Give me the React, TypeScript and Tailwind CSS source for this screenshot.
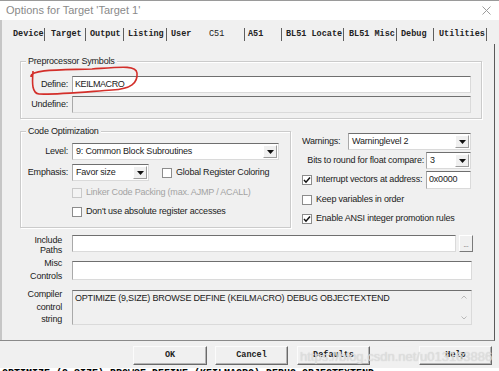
import React from 'react';
import clsx from 'clsx';

const tabs = [
  { label: 'Device', w: 'w-[35px]', pl: 'pl-[3px]', sep: true },
  { label: 'Target', w: 'w-[41px]', pl: 'pl-[6px]', sep: true },
  { label: 'Output', w: 'w-[38px]', pl: 'pl-[4px]', sep: true },
  { label: 'Listing', w: 'w-[43px]', pl: 'pl-[4px]', sep: true },
  { label: 'User', w: 'w-[36px]', pl: 'pl-[4px]', sep: false },
  { label: 'C51', w: 'w-[42px]', pl: 'pl-[6px]', sep: true },
  { label: 'A51', w: 'w-[37px]', pl: 'pl-[3px]', sep: true },
  { label: 'BL51 Locate', w: 'w-[62px]', pl: 'pl-[4px]', sep: true },
  { label: 'BL51 Misc', w: 'w-[53px]', pl: 'pl-[5px]', sep: true },
  { label: 'Debug', w: 'w-[37px]', pl: 'pl-[4px]', sep: true },
  { label: 'Utilities', w: 'w-[53px]', pl: 'pl-[5px]', sep: true },
];

const sunken = 'border border-t-[#6f6f6f] border-l-[#a9a9a9] border-r-[#dadada] border-b-[#dadada]';

function Combo({ w, text }: { w: string; text: string }) {
  return (
    <div className={clsx('flex h-[17px] items-center bg-white', sunken, w)}>
      <span className="pl-[3px] leading-none">{text}</span>
      <span className="ml-auto mr-[1px] flex h-[13px] w-[14px] items-center justify-center border border-t-white border-l-white border-b-[#9c9c9c] border-r-[#9c9c9c] bg-[#f0f0f0]">
        <svg width="7" height="4" viewBox="0 0 7 4">
          <path d="M0 0h7L3.5 4z" fill="#111" />
        </svg>
      </span>
    </div>
  );
}

function Check({ checked, disabled }: { checked?: boolean; disabled?: boolean }) {
  return (
    <span
      className={clsx(
        'flex h-[10px] w-[10px] shrink-0 items-center justify-center border',
        disabled ? 'border-[#c9c9c9] bg-[#f3f3f3]' : 'border-[#8c8c8c] bg-white'
      )}
    >
      {checked && (
        <svg width="8" height="8" viewBox="0 0 8 8">
          <path d="M1 4l2 2.2L7 1.5" fill="none" stroke="#111" strokeWidth="1.5" />
        </svg>
      )}
    </span>
  );
}

function Group({ title, className, children }: { title: string; className: string; children: React.ReactNode }) {
  return (
    <div className={clsx('relative shrink-0 border border-[#cbcbcb] shadow-[inset_1px_1px_0_#ffffff,1px_1px_0_#ffffff]', className)}>
      <span className="absolute -top-[6px] left-[5px] bg-[#f0f0f0] px-[2px] leading-[11px]">{title}</span>
      {children}
    </div>
  );
}

function Btn({ label, className }: { label: string; className: string }) {
  return (
    <button
      className={clsx(
        "flex h-[19px] items-center justify-center border border-t-[#fbfbfb] border-l-[#fbfbfb] border-b-[#6a6a6a] border-r-[#6a6a6a] bg-[#f0f0f0] font-['Liberation_Mono',monospace] text-[8.5px] font-bold tracking-normal text-[#222] shadow-[inset_-1px_-1px_0_#b4b4b4]",
        className
      )}
    >
      {label}
    </button>
  );
}

export default function App() {
  return (
    <div className="relative flex h-[371px] w-[499px] flex-col overflow-hidden bg-[#f0f0f0] font-['Liberation_Sans',Arial,sans-serif] text-[9px] tracking-[-0.2px] text-[#1b1b1b]">
      {/* Title bar */}
      <div className="flex h-[20px] shrink-0 items-center justify-between border-t border-[#9a9a9a] bg-white pl-[6px] pr-[8px]">
        <span className="text-[11px] tracking-normal text-[#8a8a8a]">Options for Target 'Target 1'</span>
        <svg width="9" height="9" viewBox="0 0 9 9">
          <path d="M0.5 0.5l8 8M8.5 0.5l-8 8" stroke="#9c9c9c" strokeWidth="1" />
        </svg>
      </div>

      {/* Tabs */}
      <div className="flex h-[24px] shrink-0 items-center pl-[10px] pt-[4px] font-['Liberation_Mono',monospace] text-[8.5px] font-bold tracking-normal text-[#222] shadow-[inset_2px_0_0_#c6c6c6]">
        {tabs.map((t) => (
          <span
            key={t.label}
            className={clsx('h-[13px] whitespace-pre leading-[13px]', t.w, t.pl, t.sep && 'border-r border-[#5e5e5e]', t.label === 'C51' && 'font-normal')}
          >
            {t.label}
          </span>
        ))}
      </div>

      {/* Tab page */}
      <div className="flex h-[297px] w-[495px] shrink-0 flex-col border-r border-b border-r-[#5a5a5a] border-b-[#8a8a8a] pl-[20px] pt-[17px] shadow-[inset_2px_0_0_#c6c6c6]">
        <Group title="Preprocessor Symbols" className="h-[58px] w-[462px] pt-[14px]">
          <div className="flex items-center">
            <span className="w-[47px] text-right">Define:</span>
            <div className={clsx('ml-[4px] flex h-[17px] w-[399px] items-center bg-white pl-[2px] tracking-[-0.4px]', sunken)}>KEILMACRO</div>
          </div>
          <div className="mt-[3px] flex items-center">
            <span className="w-[47px] text-right">Undefine:</span>
            <div className={clsx('ml-[4px] h-[17px] w-[399px] bg-[#f0f0f0]', sunken)} />
          </div>
        </Group>

        <div className="mt-[12px] flex items-start">
          <Group title="Code Optimization" className="h-[97px] w-[271px] pt-[11px]">
            <div className="flex items-center">
              <span className="w-[47px] text-right">Level:</span>
              <div className="ml-[4px]">
                <Combo w="w-[207px]" text="9: Common Block Subroutines" />
              </div>
            </div>
            <div className="mt-[4px] flex items-center">
              <span className="w-[47px] text-right">Emphasis:</span>
              <div className="ml-[4px]">
                <Combo w="w-[77px]" text="Favor size" />
              </div>
              <span className="ml-[13px]">
                <Check />
              </span>
              <span className="ml-[4px]">Global Register Coloring</span>
            </div>
            <div className="mt-[5px] flex h-[14px] items-center pl-[51px]">
              <Check disabled />
              <span className="ml-[4px] text-[#a3a3a3]">Linker Code Packing (max. AJMP / ACALL)</span>
            </div>
            <div className="mt-[5px] flex h-[14px] items-center pl-[51px]">
              <Check />
              <span className="ml-[4px]">Don't use absolute register accesses</span>
            </div>
          </Group>

          <div className="ml-[11px] flex w-[169px] flex-col pt-[2px]">
            <div className="flex items-center">
              <span className="w-[46px]">Warnings:</span>
              <Combo w="w-[123px]" text="Warninglevel 2" />
            </div>
            <div className="mt-[2px] flex items-center">
              <span className="w-[124px] pr-[2px] text-right">Bits to round for float compare:</span>
              <Combo w="w-[45px]" text="3" />
            </div>
            <div className="mt-[2px] flex items-center">
              <Check checked />
              <span className="ml-[4px]">Interrupt vectors at address:</span>
              <div className={clsx('ml-auto flex h-[18px] w-[45px] items-center bg-white pl-[2px]', sunken)}>0x0000</div>
            </div>
            <div className="mt-[4px] flex h-[14px] items-center">
              <Check />
              <span className="ml-[4px]">Keep variables in order</span>
            </div>
            <div className="mt-[5px] flex h-[14px] items-center">
              <Check checked />
              <span className="ml-[4px]">Enable ANSI integer promotion rules</span>
            </div>
          </div>
        </div>

        <div className="mt-[7px] flex items-start">
          <span className="w-[42px] text-right leading-[10px]">
            Include
            <br />
            Paths
          </span>
          <div className={clsx('ml-[10px] h-[17px] w-[384px] bg-white', sunken)} />
          <span className="ml-[3px] flex h-[17px] w-[14px] items-end justify-center border border-t-white border-l-white border-b-[#7a7a7a] border-r-[#7a7a7a] pb-[3px] text-[7px] leading-none text-[#555]">
            ...
          </span>
        </div>

        <div className="mt-[6px] flex items-start">
          <span className="-mt-[4px] w-[42px] text-right leading-[13px]">
            Misc
            <br />
            Controls
          </span>
          <div className={clsx('ml-[10px] h-[19px] w-[400px] bg-white', sunken)} />
        </div>

        <div className="mt-[7px] flex items-start">
          <span className="-mt-[2px] w-[42px] text-right leading-[12.5px]">
            Compiler
            <br />
            control
            <br />
            string
          </span>
          <div className={clsx('ml-[10px] flex h-[35px] w-[400px] bg-[#f0f0f0]', sunken)}>
            <span className="pl-[2px] pt-[2px] leading-[11px]">OPTIMIZE (9,SIZE) BROWSE DEFINE (KEILMACRO) DEBUG OBJECTEXTEND</span>
            <span className="ml-auto flex w-[14px] flex-col items-center justify-between py-[4px]">
              <svg width="6" height="4" viewBox="0 0 6 4">
                <path d="M0.5 3.5L3 1l2.5 2.5" fill="none" stroke="#b8b8b8" />
              </svg>
              <svg width="6" height="4" viewBox="0 0 6 4">
                <path d="M0.5 0.5L3 3l2.5-2.5" fill="none" stroke="#b8b8b8" />
              </svg>
            </span>
          </div>
        </div>
      </div>

      {/* Buttons */}
      <div className="flex h-[27px] shrink-0 items-start pt-[5px]">
        <Btn label="OK" className="ml-[133px] w-[74px]" />
        <Btn label="Cancel" className="ml-[8px] w-[73px]" />
        <Btn label="Defaults" className="ml-[9px] w-[73px]" />
        <Btn label="Help" className="ml-auto mr-[7px] w-[73px]" />
      </div>

      <div className="h-[12px] shrink-0 bg-white pl-[2px] pt-[1px] font-['Liberation_Mono',monospace] text-[10px] font-bold leading-[10px] tracking-normal text-black">
        OPTIMIZE (9,SIZE) BROWSE DEFINE (KEILMACRO) DEBUG OBJECTEXTEND
      </div>

      {/* watermark */}
      <span className="pointer-events-none absolute left-[300px] top-[347px] text-[13px] tracking-normal text-[#e6e6e6]/70 [text-shadow:0_0_1px_#c4c4c4]">
        https://blog.csdn.net/u013163886
      </span>

      {/* hand-drawn red mark */}
      <svg className="pointer-events-none absolute left-0 top-0" width="499" height="371" viewBox="0 0 499 371">
        <path
          d="M31 77C30 69 62 70 92 69C121 67 136 65 137 73C138 83 131 89 112 90C84 92 52 95 39 94C32 93 32 84 33 71"
          fill="none"
          stroke="#d32f2a"
          strokeWidth="1.6"
        />
      </svg>
    </div>
  );
}
